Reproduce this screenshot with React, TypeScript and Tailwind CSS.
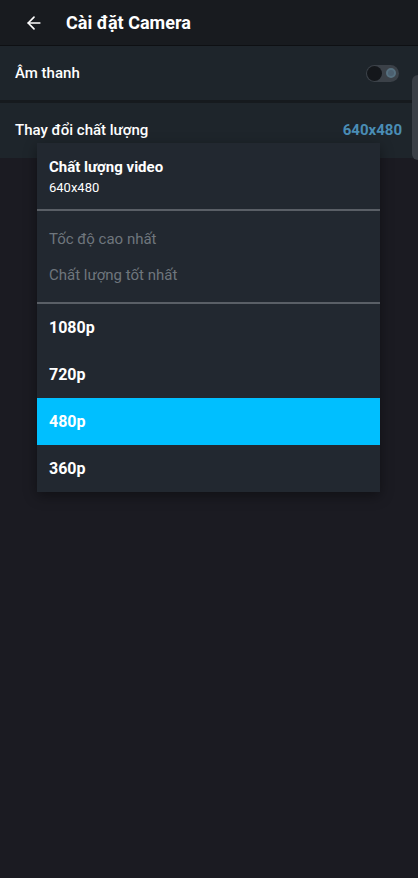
import { ArrowLeft } from 'lucide-react';

const options = ['1080p', '720p', '480p', '360p'];

export default function App() {
  return (
    <div className="relative min-h-[878px] w-[418px] overflow-hidden bg-[#1b1b22] font-['Roboto',sans-serif] text-white">
      <header className="flex h-[46px] items-center gap-[22px] border-b border-[#0e1013] bg-[#181b1f] px-[24px]">
        <ArrowLeft className="h-[20px] w-[20px] text-white" strokeWidth={2} />
        <h1 className="text-[18px] font-bold">Cài đặt Camera</h1>
      </header>

      <div className="flex h-[57px] items-center justify-between border-b-[3px] border-[#161a1e] bg-[#1e252b] pl-[15px] pr-[19px]">
        <span className="text-[15px] font-medium">Âm thanh</span>
        <div className="flex h-[17px] w-[33px] items-center justify-between rounded-full bg-[#3b4148] px-[1px]">
          <span className="h-[15px] w-[15px] rounded-full bg-[#14171b]" />
          <span className="mr-[2px] h-[10px] w-[10px] rounded-full border-2 border-[#56707f] bg-[#4c6070]" />
        </div>
      </div>

      <div className="flex h-[55px] items-center justify-between bg-[#1e252b] pl-[15px] pr-[16px]">
        <span className="text-[15px] font-medium">Thay đổi chất lượng</span>
        <span className="text-[15px] font-bold text-[#4a8db5]">640x480</span>
      </div>

      <div className="absolute right-0 top-[75px] h-[85px] w-[6px] rounded-l-md bg-[#3a3f46]" />

      <div className="absolute left-[37px] top-[143px] w-[343px] bg-[#222830] shadow-[0_4px_12px_rgba(0,0,0,0.4)]">
        <div className="px-[12px] pb-[12px] pt-[14px]">
          <div className="text-[15px] font-bold leading-[20px]">Chất lượng video</div>
          <div className="mt-[2px] text-[13px] leading-[18px]">640x480</div>
        </div>
        <div className="h-[2px] bg-[#5a5f66]" />
        <div className="flex flex-col gap-[18px] px-[12px] pb-[18px] pt-[19px] text-[15px] leading-[18px] text-[#6f767d]">
          <span>Tốc độ cao nhất</span>
          <span>Chất lượng tốt nhất</span>
        </div>
        <div className="h-[2px] bg-[#5a5f66]" />
        {options.map((o) => (
          <div
            key={o}
            className={
              o === '480p'
                ? 'flex h-[47px] items-center bg-[#00bfff] px-[12px] text-[16px] font-bold'
                : 'flex h-[47px] items-center px-[12px] text-[16px] font-bold'
            }
          >
            {o}
          </div>
        ))}
      </div>
    </div>
  );
}
